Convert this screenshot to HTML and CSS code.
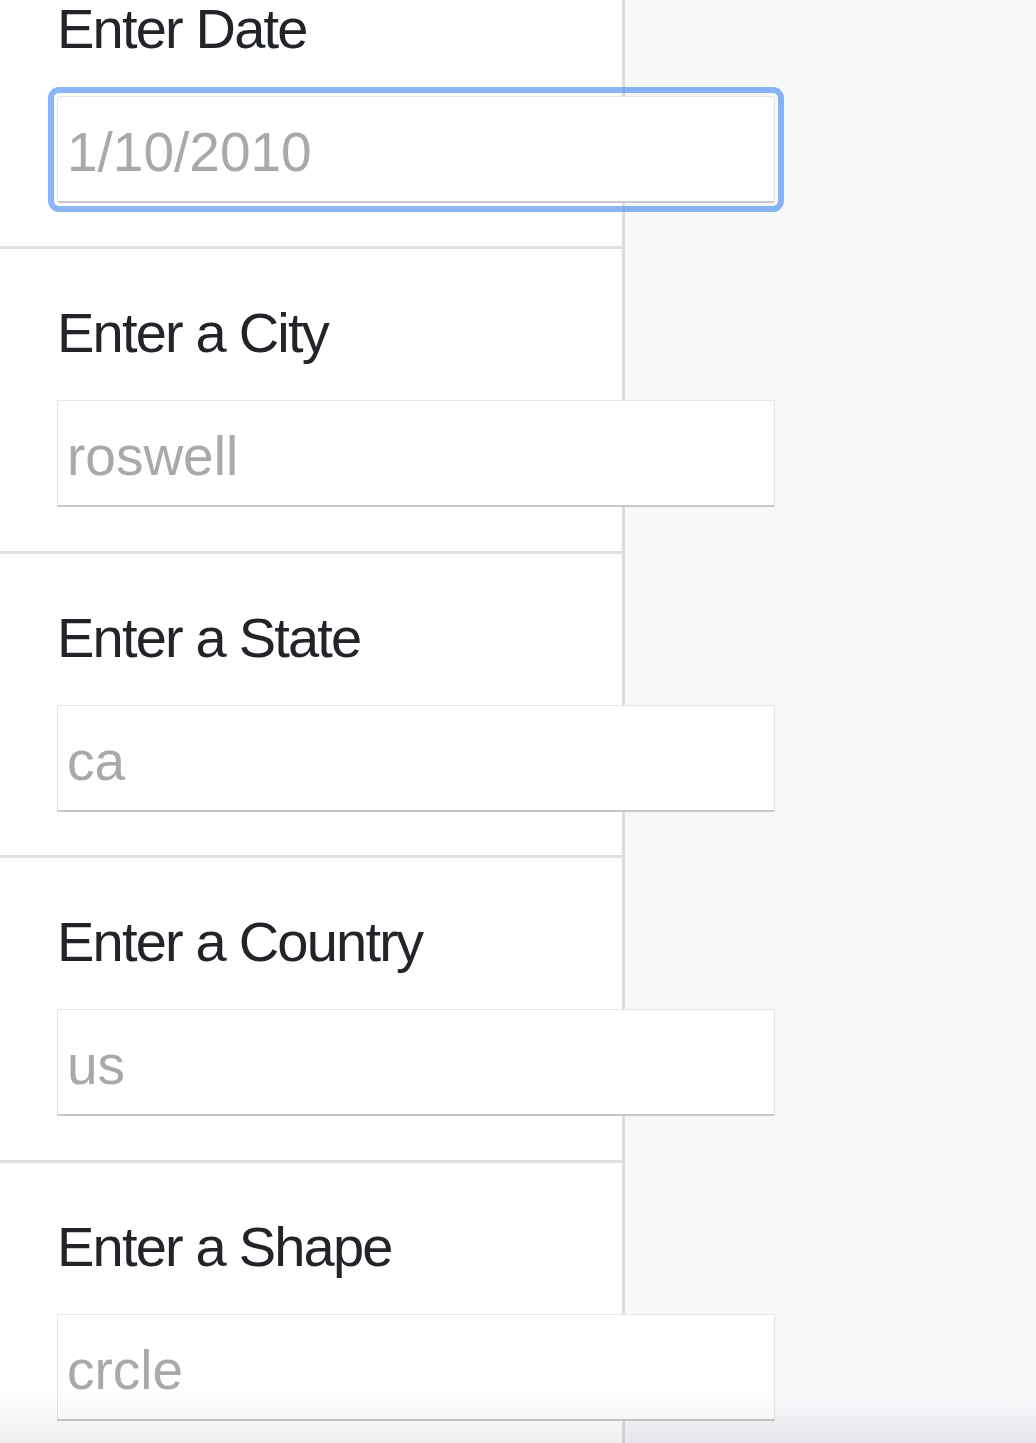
FILE: index.html
```html
<!DOCTYPE html>
<html lang="en">
<head>
<meta charset="utf-8">
<title>Form</title>
<link rel="stylesheet" href="styles.css">
</head>
<body>
<div class="layout">
  <main class="panel">
    <form class="form">
      <div class="field">
        <label class="field-label" for="date">Enter Date</label>
        <input class="field-input is-focused" id="date" type="text" placeholder="1/10/2010">
      </div>
      <div class="field">
        <label class="field-label" for="city">Enter a City</label>
        <input class="field-input" id="city" type="text" placeholder="roswell">
      </div>
      <div class="field">
        <label class="field-label" for="state">Enter a State</label>
        <input class="field-input" id="state" type="text" placeholder="ca">
      </div>
      <div class="field">
        <label class="field-label" for="country">Enter a Country</label>
        <input class="field-input" id="country" type="text" placeholder="us">
      </div>
      <div class="field">
        <label class="field-label" for="shape">Enter a Shape</label>
        <input class="field-input" id="shape" type="text" placeholder="crcle">
      </div>
    </form>
  </main>
  <aside class="side"></aside>
</div>
<div class="bottom-fade"></div>
</body>
</html>
```
FILE: styles.css
```css
html, body {
  margin: 0;
  padding: 0;
  height: 100%;
  overflow: hidden;
}
body {
  background: #f7f8fa;
  font-family: "Liberation Sans", Arial, sans-serif;
  color: #212529;
}
.layout {
  display: flex;
  min-height: 100%;
}
.panel {
  width: 622px;
  flex: 0 0 622px;
  background: #ffffff;
  border-right: 3px solid #dddddd;
  min-height: 1600px;
}
.side {
  flex: 1;
}
.form {
  display: flex;
  flex-direction: column;
  margin-top: -55px;
}
.field {
  display: flex;
  flex-direction: column;
  align-items: flex-start;
  box-sizing: content-box;
  height: 251.4px;
  padding: 50px 0 0 57px;
  border-bottom: 3px solid #e1e1e1;
}
.field-label {
  font-size: 56px;
  line-height: 67px;
  letter-spacing: -1.8px;
  color: #212529;
  margin-bottom: 34px;
}
.field-input {
  position: relative;
  width: 718px;
  height: 107px;
  box-sizing: border-box;
  margin: 0;
  padding: 6px 0 0 9px;
  border: 1px solid #e6e6e6;
  border-bottom: 2px solid #c9c9c9;
  border-radius: 0;
  background: #ffffff;
  font-family: "Liberation Sans", Arial, sans-serif;
  font-size: 55px;
  color: #555;
  outline: none;
}
.field-input::placeholder {
  color: #a9a9a9;
  opacity: 1;
}
.field-input.is-focused {
  outline: 6px solid rgba(70, 135, 240, 0.62);
  outline-offset: 3px;
  border-radius: 2px;
}
.bottom-fade {
  position: fixed;
  left: 0;
  right: 0;
  bottom: 0;
  height: 50px;
  pointer-events: none;
  background: linear-gradient(to bottom, rgba(0, 0, 0, 0) 0%, rgba(20, 20, 40, 0.07) 100%);
}
```
